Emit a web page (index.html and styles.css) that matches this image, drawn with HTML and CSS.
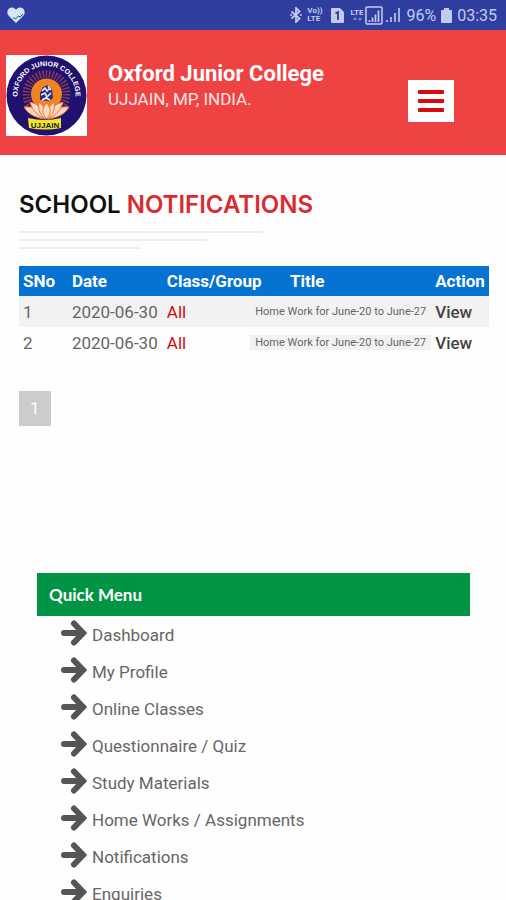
FILE: index.html
```html
<!DOCTYPE html>
<html lang="en">
<head>
<meta charset="utf-8">
<meta name="viewport" content="width=device-width, initial-scale=1">
<title>Oxford Junior College</title>
<link rel="stylesheet" href="styles.css">
</head>
<body>
<svg class="sprite" aria-hidden="true">
  <symbol id="arrow" viewBox="0 0 26 26">
    <path d="M3 13H21M13 3.500L22 13L13 22.500" fill="none" stroke="currentColor" stroke-width="6" stroke-linecap="round" stroke-linejoin="miter"/>
  </symbol>
</svg>

<div class="status">
  <svg class="heart" viewBox="0 0 18 16" aria-hidden="true">
    <path d="M9 16L1.500 8.500C-.8 6 .2 1 4.500 .5C6.500 .3 8 1.300 9 2.800C10 1.300 11.500 .3 13.500 .5C17.800 1 18.800 6 16.500 8.500Z" fill="#d5e6fa"/>
    <path d="M6 10.500L8.500 12L11.500 9L13 10L16 7" fill="none" stroke="#303f9f" stroke-width="1"/>
  </svg>
  <div class="status-right">
    <svg class="bt" viewBox="0 0 12 16" aria-hidden="true">
      <path d="M1.500 4.500L9.500 11.500L6 15V1L9.500 4.500L1.500 11.500" fill="none" stroke="currentColor" stroke-width="1.800"/>
      <circle cx="1.200" cy="8" r="1" fill="currentColor"/><circle cx="10.800" cy="8" r="1" fill="currentColor"/>
    </svg>
    <span class="volte"><span>Vo))</span><span>LTE</span></span>
    <svg class="sim" viewBox="0 0 13 15" aria-hidden="true">
      <path d="M1 0H9L13 4V14Q13 15 12 15H1Q0 15 0 14V1Q0 0 1 0Z" fill="currentColor"/>
      <path d="M4.500 5.500L7 4V12" fill="none" stroke="#303f9f" stroke-width="1.800"/>
    </svg>
    <span class="lte"><span>LTE</span><svg viewBox="0 0 12 5" aria-hidden="true"><path d="M2 3L4 0L6 3ZM7 1L9 4L11 1Z" fill="#7f89cf"/></svg></span>
    <svg class="boxed" viewBox="0 0 18 19" aria-hidden="true">
      <rect x="1" y="1" width="16" height="17" rx="1" fill="none" stroke="currentColor" stroke-width="1.500"/>
      <path d="M4.500 16V14M7.500 16V11.500M10.500 16V8.500M13.500 16V4.500" stroke="currentColor" stroke-width="1.700"/>
    </svg>
    <svg class="bars" viewBox="0 0 15 16" aria-hidden="true">
      <path d="M1 15V13M5 15V10M9 15V6M13 15V1" stroke="currentColor" stroke-width="1.600"/>
    </svg>
    <span class="battery-text">96%</span>
    <svg class="battery" viewBox="0 0 11 15" aria-hidden="true">
      <path d="M3 0H8V2H10Q11 2 11 3V14Q11 15 10 15H1Q0 15 0 14V3Q0 2 1 2H3Z" fill="currentColor"/>
    </svg>
    <span class="clock">03:35</span>
  </div>
</div>

<header class="header">
  <svg class="logo" viewBox="0 0 81 81" role="img" aria-label="Oxford Junior College, Ujjain">
    <defs><path id="arc" d="M11.500 40A29 29 0 0 1 69.500 40"/></defs>
    <rect width="81" height="81" fill="#fff"/>
    <circle cx="40.500" cy="40.500" r="40" fill="#21106e"/>
    <circle cx="40.500" cy="39" r="20" fill="none" stroke="#7d3c55" stroke-width="8" stroke-dasharray="1.600 1.600"/>
    <circle cx="40.500" cy="39" r="15.500" fill="#f28420"/>
    <text class="logo-arc"><textPath href="#arc" startOffset="50%" text-anchor="middle">OXFORD JUNIOR COLLEGE</textPath></text>
    <g fill="#fbd9bd" stroke="#e8743b" stroke-width="1">
      <path d="M40 64C29 63 22 59 18 52C26 51 33 54 40 64ZM41 64C52 63 59 59 63 52C55 51 48 54 41 64Z"/>
      <path d="M39 64C30 60 26 54 24 47C32 49 38 54 39 64ZM42 64C51 60 55 54 57 47C49 49 43 54 42 64Z"/>
      <path d="M39 64C33 58 32 54 33 47C38 51 41 57 39 64ZM42 64C48 58 49 54 48 47C43 51 40 57 42 64Z"/>
      <path d="M40.500 64C35 58 36 53 40.500 48C45 53 46 58 40.500 64Z"/>
    </g>
    <path d="M34 45V38L37 32L42 30L46 34L47 43L43 46Z" fill="#2f2c78"/>
    <path d="M36 36L39 33L41 36L44 33M35 40L39 38L41 42L45 38M36 45L40 43L44 45M42 31L45 35" fill="none" stroke="#e8edff" stroke-width="1.600"/>
    <path d="M22 63Q39 67 55 63V73Q39 76 23 73Z" fill="#f3e72d"/>
    <text class="logo-town" x="39" y="73" text-anchor="middle">UJJAIN</text>
  </svg>
  <div class="brand">
    <h1>Oxford Junior College</h1>
    <p>UJJAIN, MP, INDIA.</p>
  </div>
  <button class="menu-button" type="button" aria-label="Menu"><i></i><i></i><i></i></button>
</header>

<main>
  <section class="notifications">
    <h2>SCHOOL <span>NOTIFICATIONS</span></h2>
    <div class="rules"><i></i><i></i><i></i></div>
    <table>
      <colgroup><col class="c-no"><col class="c-date"><col class="c-group"><col class="c-title"><col class="c-action"></colgroup>
      <thead>
        <tr><th>SNo</th><th>Date</th><th>Class/Group</th><th>Title</th><th>Action</th></tr>
      </thead>
      <tbody>
        <tr><td>1</td><td>2020-06-30</td><td class="all">All</td><td class="title"><div><span>Home Work for June-20 to June-27</span></div></td><td><a href="#">View</a></td></tr>
        <tr><td>2</td><td>2020-06-30</td><td class="all">All</td><td class="title"><div><span>Home Work for June-20 to June-27</span></div></td><td><a href="#">View</a></td></tr>
      </tbody>
    </table>
    <nav class="pages" aria-label="Pages"><a href="#">1</a></nav>
  </section>

  <nav class="quick" aria-labelledby="quick-title">
    <h3 id="quick-title">Quick Menu</h3>
    <ul>
      <li><a href="#"><svg><use href="#arrow"/></svg><span>Dashboard</span></a></li>
      <li><a href="#"><svg><use href="#arrow"/></svg><span>My Profile</span></a></li>
      <li><a href="#"><svg><use href="#arrow"/></svg><span>Online Classes</span></a></li>
      <li><a href="#"><svg><use href="#arrow"/></svg><span>Questionnaire / Quiz</span></a></li>
      <li><a href="#"><svg><use href="#arrow"/></svg><span>Study Materials</span></a></li>
      <li><a href="#"><svg><use href="#arrow"/></svg><span>Home Works / Assignments</span></a></li>
      <li><a href="#"><svg><use href="#arrow"/></svg><span>Notifications</span></a></li>
      <li><a href="#"><svg><use href="#arrow"/></svg><span>Enquiries</span></a></li>
    </ul>
  </nav>
</main>
</body>
</html>
```
FILE: styles.css
```css
* { box-sizing: border-box; }
body { margin: 0; background: #fefefe; color: #666; font-family: Roboto, "Liberation Sans", sans-serif; font-size: 17px; }
h1, h2, h3, p, ul { margin: 0; padding: 0; }
a { color: inherit; text-decoration: none; }
.sprite { display: none; }

.status { display: flex; align-items: center; justify-content: space-between; height: 30px; padding: 0 9px 0 7px; background: #303f9f; color: #c3cbee; }
.status svg { display: block; }
.heart { width: 18px; height: 16px; }
.status-right { display: flex; align-items: center; }
.bt { width: 12px; height: 16px; margin-right: 5px; }
.volte, .lte { display: flex; flex-direction: column; font-size: 8px; line-height: 8px; font-weight: 700; }
.volte { margin-right: 8px; }
.lte { align-items: center; margin-right: 2px; }
.lte svg { width: 12px; height: 5px; }
.sim { width: 13px; height: 15px; margin-right: 7px; }
.boxed { width: 18px; height: 19px; margin-right: 3px; }
.bars { width: 15px; height: 16px; margin-right: 5px; }
.battery-text, .clock { font-size: 16px; }
.battery { width: 11px; height: 15px; margin: 0 5px; }

.header { display: flex; align-items: flex-start; min-height: 125px; padding: 25px 52px 19px 6px; background: #ef4243; color: #fff; }
.logo { flex: none; width: 81px; height: 81px; }
.logo-arc { font: 700 7px "Liberation Sans", sans-serif; fill: #fff; }
.logo-town { font: 700 8px "Liberation Sans", sans-serif; fill: #222; }
.brand { flex: 1; padding: 6px 0 0 21px; }
.brand h1 { font-size: 22px; line-height: 26px; font-weight: 700; }
.brand p { font-size: 17px; line-height: 24px; color: #fde6e6; }
.menu-button { display: flex; flex-direction: column; align-items: center; justify-content: center; gap: 5px; width: 46px; height: 42px; margin-top: 25px; padding: 0; border: 0; background: #fff; }
.menu-button i { width: 26px; height: 4px; border-radius: 1px; background: #d80c10; }

.notifications { padding: 34px 17px 0 19px; }
h2 { font: 600 24px/32px Inter, sans-serif; color: #111; }
h2 span { color: #da2c30; }
.rules { display: grid; gap: 6px; padding: 10px 0 17px; }
.rules i { height: 2px; background: #eee; }
.rules i:nth-child(1) { width: 52%; }
.rules i:nth-child(2) { width: 40%; }
.rules i:nth-child(3) { width: 26%; }

table { width: 100%; table-layout: fixed; border-collapse: collapse; }
.c-no { width: 10.4%; }
.c-date { width: 20.2%; }
.c-group { width: 26.2%; }
.c-title { width: 30.9%; }
.c-action { width: 12.3%; }
th, td { height: 31px; padding: 0 0 0 4px; text-align: left; white-space: nowrap; }
th { height: 30px; background: #0673d2; color: #fff; font-weight: 700; }
tbody tr:first-child { background: #f2f2f2; }
.all { color: #c90d10; }
td a { color: #444; font-weight: 500; }
.title div { display: flex; justify-content: flex-end; }
.title span { padding: 0 5px; font-size: 11px; line-height: 15px; background: #f2f2f2; }

.pages { display: flex; padding-top: 33px; }
.pages a { padding: 0 11px; line-height: 35px; background: #ccc; color: #fff; }

.quick { margin: 147px 36px 0 37px; }
.quick h3 { padding: 0 12px; font: 700 17px/43px Lato, sans-serif; background: #009444; color: #fff; }
.quick ul { list-style: none; padding-left: 24px; }
.quick li a { display: flex; align-items: center; gap: 5px; height: 37px; }
.quick svg { flex: none; width: 26px; height: 26px; color: #555; margin-bottom: 4px; }
```
